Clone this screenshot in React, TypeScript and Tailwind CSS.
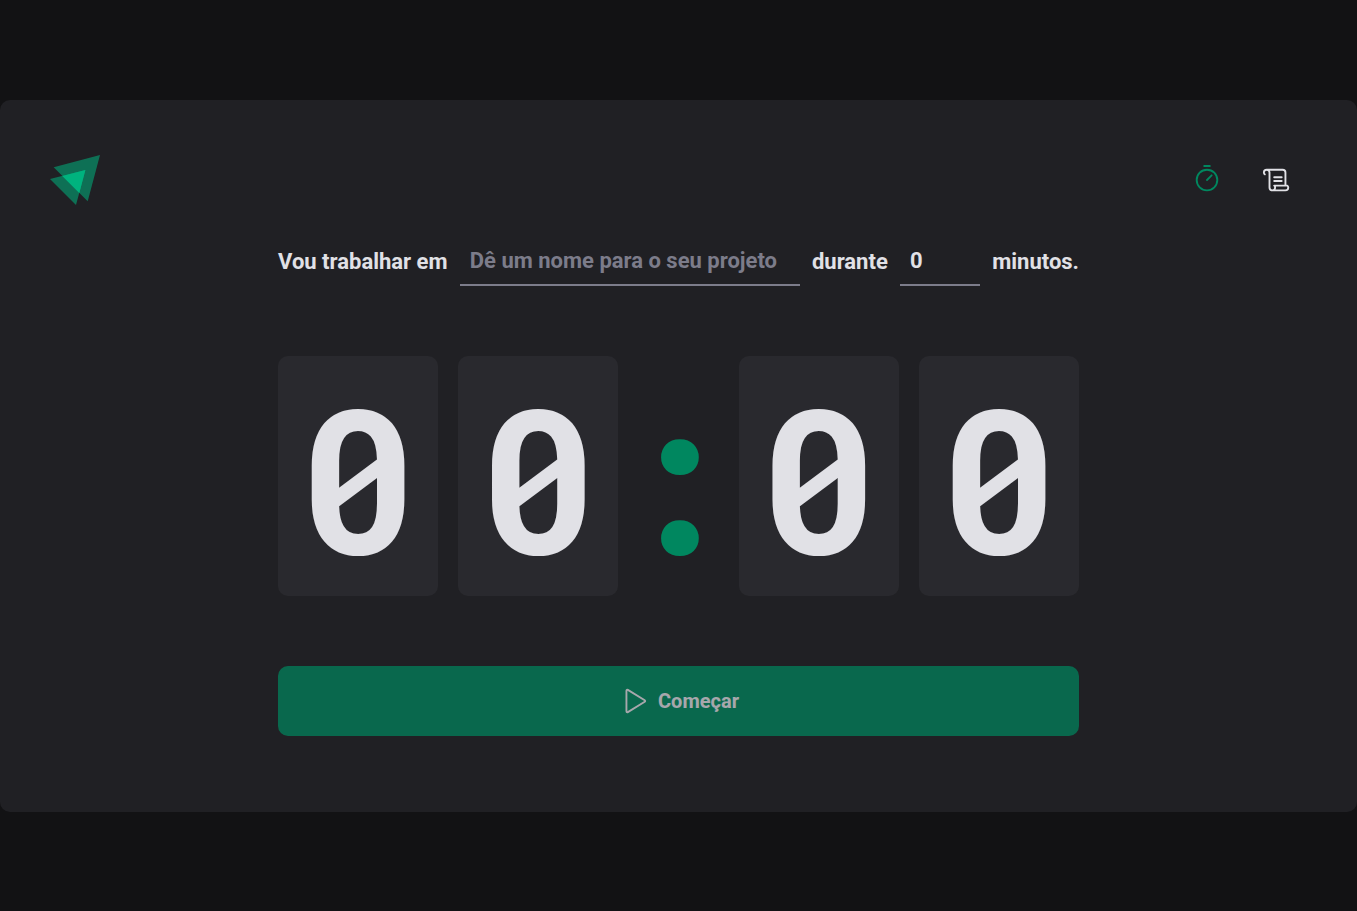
import { useState } from "react";
import type { FormEvent } from "react";
import { PiPlay, PiScroll } from "react-icons/pi";
import { clsx } from "clsx";

// ─── Icons ────────────────────────────────────────────────────────────────────

function Logo() {
    return (
        <svg viewBox="0 0 50 50" className="h-[50px] w-[50px]" aria-hidden="true">
            <path d="M3.7 12.3 50 0 37.7 46.3Z" fill="#00B37E" opacity="0.55" />
            <path d="M0 24 35.4 15 26 50Z" fill="#00B37E" opacity="0.55" />
            <path d="M12.3 20.9 35.4 15 29.3 37.9Z" fill="#00B37E" />
        </svg>
    );
}

function TimerIcon({ size }: { size: number }) {
    return (
        <svg
            viewBox="0 0 256 256"
            width={size}
            height={size}
            fill="none"
            stroke="currentColor"
            strokeWidth="16"
            strokeLinecap="round"
            strokeLinejoin="round"
        >
            <circle cx="128" cy="128" r="88" />
            <path d="M128 128 167.6 88.4M104 8h48" />
        </svg>
    );
}

// ─── Constants ────────────────────────────────────────────────────────────────

const NAV_ITEMS = [
    { label: "Timer", href: "#timer", icon: TimerIcon, active: true },
    { label: "Histórico", href: "#history", icon: PiScroll, active: false },
];

const MAX_MINUTES = 60;

// ─── Header ───────────────────────────────────────────────────────────────────

function Header() {
    return (
        <header className="flex items-center justify-between">
            <Logo />
            <nav className="flex gap-2.5">
                {NAV_ITEMS.map((item) => (
                    <a
                        key={item.href}
                        href={item.href}
                        aria-label={item.label}
                        className={clsx(
                            "flex h-[60px] w-[60px] items-center justify-center border-y-[3px] border-transparent",
                            "hover:border-b-[#00875f]",
                            item.active ? "text-[#00875f]" : "text-[#e1e1e6]"
                        )}
                    >
                        <item.icon size={30} />
                    </a>
                ))}
            </nav>
        </header>
    );
}

// ─── Countdown ────────────────────────────────────────────────────────────────

function Digit({ value }: { value: string }) {
    return (
        <span className="rounded-[10px] bg-[#29292e] px-5 py-10">{value}</span>
    );
}

function Countdown({ minutes, seconds }: { minutes: string; seconds: string }) {
    return (
        <div className="flex w-full justify-between gap-5 font-['Roboto_Mono',monospace] text-[200px] leading-[160px] font-bold">
            <Digit value={minutes[0]} />
            <Digit value={minutes[1]} />
            <span className="flex w-20 justify-center py-10 text-[#00875f]">:</span>
            <Digit value={seconds[0]} />
            <Digit value={seconds[1]} />
        </div>
    );
}

// ─── Page ─────────────────────────────────────────────────────────────────────

const inputClass =
    "h-[50px] border-b-2 border-[#7c7c8a] bg-transparent px-2.5 text-[#e1e1e6] outline-none placeholder:text-[#7c7c8a] focus:border-[#00875f]";

export default function App() {
    const [task, setTask] = useState("");
    const [minutes, setMinutes] = useState(0);

    const total = String(minutes).padStart(2, "0");

    function handleSubmit(e: FormEvent) {
        e.preventDefault();
    }

    return (
        <div className="flex min-h-screen flex-col bg-[#121214] pt-[100px] pb-[99px] font-['Roboto',sans-serif] text-[#e1e1e6]">
            <div className="flex flex-1 flex-col rounded-[10px] bg-[#202024] p-[50px]">
                <Header />

                <main className="flex flex-1 flex-col items-center justify-center">
                    <form onSubmit={handleSubmit} className="flex w-full max-w-[801px] flex-col items-center gap-[70px]">
                        <div className="flex w-full items-center justify-between text-[22px] font-bold">
                            <label htmlFor="task">Vou trabalhar em</label>
                            <input
                                id="task"
                                type="text"
                                placeholder="Dê um nome para o seu projeto"
                                value={task}
                                onChange={(e) => setTask(e.target.value)}
                                className={clsx(inputClass, "w-[340px]")}
                            />
                            <label htmlFor="minutes">durante</label>
                            <input
                                id="minutes"
                                type="number"
                                min={0}
                                max={MAX_MINUTES}
                                value={minutes}
                                onChange={(e) => setMinutes(Math.min(MAX_MINUTES, Number(e.target.value)))}
                                className={clsx(inputClass, "w-20")}
                            />
                            <span>minutos.</span>
                        </div>

                        <Countdown minutes={total} seconds="00" />

                        <button
                            type="submit"
                            disabled={!task}
                            className="flex h-[70px] w-full items-center justify-center gap-2.5 rounded-[10px] bg-[#00875f] text-xl font-bold disabled:cursor-not-allowed disabled:opacity-70"
                        >
                            <PiPlay size={30} />
                            Começar
                        </button>
                    </form>
                </main>
            </div>
        </div>
    );
}
